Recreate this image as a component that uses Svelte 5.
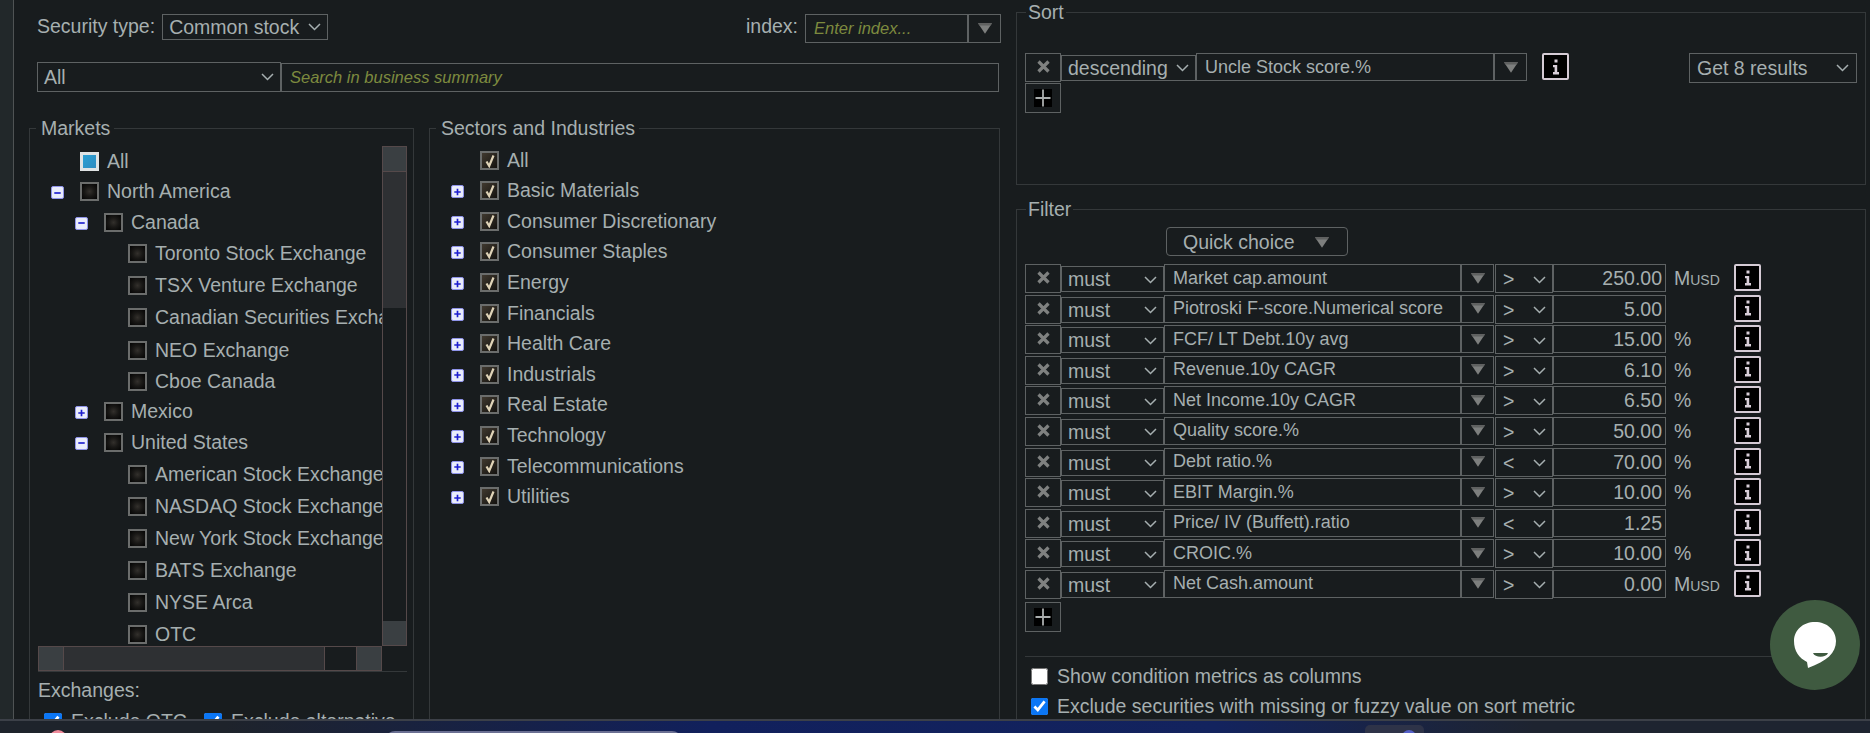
<script>
  const markets = [
    { label: 'All', depth: 0, state: 'partial', h: 30 },
    { label: 'North America', depth: 0, toggle: '-', h: 31 },
    { label: 'Canada', depth: 1, toggle: '-', h: 30 },
    { label: 'Toronto Stock Exchange', depth: 2, h: 32 },
    { label: 'TSX Venture Exchange', depth: 2, h: 32 },
    { label: 'Canadian Securities Exchange', depth: 2, h: 33 },
    { label: 'NEO Exchange', depth: 2, h: 32 },
    { label: 'Cboe Canada', depth: 2, h: 31 },
    { label: 'Mexico', depth: 1, toggle: '+', h: 29 },
    { label: 'United States', depth: 1, toggle: '-', h: 32 },
    { label: 'American Stock Exchange', depth: 2, h: 32 },
    { label: 'NASDAQ Stock Exchange', depth: 2, h: 32 },
    { label: 'New York Stock Exchange', depth: 2, h: 32 },
    { label: 'BATS Exchange', depth: 2, h: 32 },
    { label: 'NYSE Arca', depth: 2, h: 32 },
    { label: 'OTC', depth: 2, h: 32 }
  ];

  const sectors = [
    'Basic Materials', 'Consumer Discretionary', 'Consumer Staples', 'Energy', 'Financials',
    'Health Care', 'Industrials', 'Real Estate', 'Technology', 'Telecommunications', 'Utilities'
  ];

  const filters = [
    { metric: 'Market cap.amount', op: '>', value: '250.00', unit: 'M' },
    { metric: 'Piotroski F-score.Numerical score', op: '>', value: '5.00', unit: '' },
    { metric: 'FCF/ LT Debt.10y avg', op: '>', value: '15.00', unit: '%' },
    { metric: 'Revenue.10y CAGR', op: '>', value: '6.10', unit: '%' },
    { metric: 'Net Income.10y CAGR', op: '>', value: '6.50', unit: '%' },
    { metric: 'Quality score.%', op: '>', value: '50.00', unit: '%' },
    { metric: 'Debt ratio.%', op: '<', value: '70.00', unit: '%' },
    { metric: 'EBIT Margin.%', op: '>', value: '10.00', unit: '%' },
    { metric: 'Price/ IV (Buffett).ratio', op: '<', value: '1.25', unit: '' },
    { metric: 'CROIC.%', op: '>', value: '10.00', unit: '%' },
    { metric: 'Net Cash.amount', op: '>', value: '0.00', unit: 'M' }
  ];
</script>

{#snippet chevron()}
  <svg class="chev" viewBox="0 0 13 8" width="13" height="8"><path d="M1 1 L6.5 6.5 L12 1" fill="none" stroke="#a6afb0" stroke-width="1.5" /></svg>
{/snippet}

{#snippet tri()}
  <svg class="tri" viewBox="0 0 15 11" width="14" height="11"><path d="M0 0 H15 L7.5 11 Z" fill="#7d7f7e" /><path d="M0 0 H15 L13.4 2.4 H1.6 Z" fill="#5f6160" /></svg>
{/snippet}

{#snippet remove()}
  <span class="btn-x">
    <svg viewBox="0 0 13 13" width="13" height="13"><path d="M1.5 1.5 L11.5 11.5 M11.5 1.5 L1.5 11.5" stroke="#7f8180" stroke-width="3.2" /></svg>
  </span>
{/snippet}

{#snippet add()}
  <span class="btn-x add">
    <span class="plus-box">
      <svg viewBox="0 0 18 18" width="18" height="18"><path d="M9 0.5 V17.5 M1.5 9 H16.5" stroke="#a9adad" stroke-width="1.8" /></svg>
    </span>
  </span>
{/snippet}

{#snippet info()}
  <span class="info">
    <svg viewBox="0 0 8 16" width="8" height="16">
      <rect x="2.5" y="0.5" width="3" height="3" fill="#d9cfd9" />
      <path d="M1 6 H5.2 V13 H7 V15.5 H1 V13 H2.6 V8.2 H1 Z" fill="#d9cfd9" />
    </svg>
  </span>
{/snippet}

{#snippet toggle(sign)}
  <span class="toggle">
    <svg viewBox="0 0 12 12" width="12" height="12">
      <path d={sign === '+' ? 'M2.5 6 H9.5 M6 2.5 V9.5' : 'M2.5 6 H9.5'} stroke="#1c1ccf" stroke-width="1.8" />
    </svg>
  </span>
{/snippet}

{#snippet checked()}
  <span class="tick">
    <svg viewBox="0 0 12 14" width="12" height="14"><path d="M2.5 7.5 L5.2 12 L9.5 1.5" fill="none" stroke="#e0d4b8" stroke-width="2.2" /></svg>
  </span>
{/snippet}

<div class="page">
  <div class="rail"></div>

  <div class="screen">
    <div class="left">
      <div class="top-row">
        <span class="label">Security type:</span>
        <span class="select sec-type">Common stock {@render chevron()}</span>
        <span class="spacer"></span>
        <span class="label">index:</span>
        <span class="combo">
          <span class="placeholder">Enter index...</span>
          <span class="combo-btn">{@render tri()}</span>
        </span>
      </div>

      <div class="search-row">
        <span class="select all-select">All {@render chevron()}</span>
        <span class="search"><span class="placeholder">Search in business summary</span></span>
      </div>

      <div class="panels">
        <fieldset class="markets">
          <legend>Markets</legend>
          <div class="tree-box">
            <div class="tree">
              {#each markets as m}
                <div class="node" style="height: {m.h}px; padding-left: {m.depth * 24}px">
                  <span class="toggle-slot">{#if m.toggle}{@render toggle(m.toggle)}{/if}</span>
                  <span class="box" class:partial={m.state === 'partial'}></span>
                  <span class="node-label">{m.label}</span>
                </div>
              {/each}
            </div>
            <div class="vscroll">
              <span class="sb-end"></span>
              <span class="sb-thumb v"></span>
              <span class="sb-track"></span>
              <span class="sb-end"></span>
            </div>
            <div class="hscroll">
              <span class="sb-end"></span>
              <span class="sb-thumb h"></span>
              <span class="sb-track"></span>
              <span class="sb-end"></span>
            </div>
          </div>
          <div class="exchanges">
            <div class="label">Exchanges:</div>
            <div class="ex-row">
              <input type="checkbox" checked /> <span>Exclude OTC</span>
              <input class="second" type="checkbox" checked /> <span>Exclude alternative</span>
            </div>
          </div>
        </fieldset>

        <fieldset class="sectors">
          <legend>Sectors and Industries</legend>
          <div class="node sector first">
            <span class="toggle-slot"></span>
            <span class="box">{@render checked()}</span>
            <span class="node-label">All</span>
          </div>
          {#each sectors as s}
            <div class="node sector">
              <span class="toggle-slot">{@render toggle('+')}</span>
              <span class="box">{@render checked()}</span>
              <span class="node-label">{s}</span>
            </div>
          {/each}
        </fieldset>
      </div>
    </div>

    <div class="right">
      <fieldset class="sort">
        <legend>Sort</legend>
        <div class="sort-row">
          <div class="sort-main">
            <div class="row">
              {@render remove()}
              <span class="select order">descending {@render chevron()}</span>
              <span class="combo metric sort-metric">
                <span class="metric-text">Uncle Stock score.%</span>
                <span class="combo-btn">{@render tri()}</span>
              </span>
              <span class="info-gap">{@render info()}</span>
            </div>
            {@render add()}
          </div>
          <span class="select results">Get 8 results {@render chevron()}</span>
        </div>
      </fieldset>

      <fieldset class="filter">
        <legend>Filter</legend>
        <div class="quick-row">
          <span class="quick">Quick choice {@render tri()}</span>
        </div>
        {#each filters as f}
          <div class="row filter-row">
            {@render remove()}
            <span class="select must">must {@render chevron()}</span>
            <span class="combo metric">
              <span class="metric-text">{f.metric}</span>
              <span class="combo-btn">{@render tri()}</span>
            </span>
            <span class="select op">{f.op} {@render chevron()}</span>
            <span class="value">{f.value}</span>
            <span class="unit">{#if f.unit === 'M'}M<small>USD</small>{:else}{f.unit}{/if}</span>
            {@render info()}
          </div>
        {/each}
        {@render add()}
        <div class="options">
          <label><input type="checkbox" /> Show condition metrics as columns</label>
          <label><input type="checkbox" checked /> Exclude securities with missing or fuzzy value on sort metric</label>
        </div>
      </fieldset>
    </div>
  </div>

  <div class="chat">
    <svg viewBox="0 0 42 46" width="42" height="46">
      <path d="M21 0 C33 0 42 8 42 19 C42 31 33 39 14 46 L13 40 C5 36 0 29 0 19 C0 8 9 0 21 0 Z" fill="#fff" />
      <path d="M19 31 H34 C32 36 21 36 19 31 Z" fill="#3f5a40" />
    </svg>
  </div>

  <div class="taskbar">
    <span class="dot"></span>
    <span class="pill"></span>
    <span class="tab"><span class="tab-dot"></span></span>
  </div>
</div>

<style>
  :global(body) {
    margin: 0;
    background: #181c1e;
    overflow: hidden;
  }

  .page {
    position: relative;
    width: 1870px;
    height: 733px;
    overflow: hidden;
    font-family: 'Liberation Sans', Arial, sans-serif;
    font-size: 19.5px;
    color: #a6afb0;
  }

  .rail {
    position: absolute;
    left: 0;
    top: 0;
    bottom: 0;
    width: 13px;
    background: #22282a;
    border-right: 1px solid #4f5354;
  }

  .screen {
    display: flex;
    height: 719px;
    overflow: hidden;
    padding-left: 14px;
    box-sizing: border-box;
  }

  .left {
    width: 1002px;
    flex: none;
    padding-left: 15px;
    box-sizing: border-box;
  }

  .top-row {
    display: flex;
    align-items: flex-start;
    height: 29px;
    margin-top: 14px;
    padding-left: 8px;
    padding-right: 15px;
  }

  .spacer {
    flex: 1;
  }

  .label {
    white-space: nowrap;
    line-height: 24px;
  }

  .select {
    display: inline-flex;
    align-items: center;
    justify-content: space-between;
    box-sizing: border-box;
    border: 1px solid #5e6263;
    padding: 0 6px;
    white-space: nowrap;
    background: #181c1e;
  }

  .sec-type {
    width: 166px;
    height: 26px;
    margin-left: 7px;
  }

  .combo {
    display: inline-flex;
    box-sizing: border-box;
    border: 1px solid #5e6263;
    align-items: stretch;
    background: #181c1e;
  }

  .top-row .combo {
    width: 196px;
    height: 29px;
    margin-left: 7px;
  }

  .placeholder {
    flex: 1;
    align-self: center;
    padding-left: 8px;
    font-style: italic;
    font-size: 16.5px;
    color: #7d8a3e;
  }

  .combo-btn {
    flex: none;
    width: 33px;
    display: flex;
    align-items: center;
    justify-content: center;
    border-left: 2px solid #5e6263;
    box-sizing: border-box;
  }

  .search-row {
    display: flex;
    margin-top: 19px;
    margin-left: 8px;
    height: 30px;
  }

  .all-select {
    width: 244px;
    height: 30px;
  }

  .search {
    display: flex;
    align-items: center;
    width: 718px;
    height: 29px;
    margin-top: 1px;
    box-sizing: border-box;
    border: 1px solid #5e6263;
  }

  .panels {
    display: flex;
    gap: 15px;
    margin-top: 25px;
    height: 620px;
  }

  fieldset {
    margin: 0;
    padding: 0;
    box-sizing: border-box;
    border: 1px solid #34383a;
    min-width: 0;
  }

  legend {
    margin-left: 6px;
    padding: 0 4px 0 5px;
    font-size: 19.5px;
    line-height: 23px;
    color: #a6afb0;
  }

  .markets {
    width: 385px;
    padding: 6px 0 0 8px;
  }

  .markets legend {
    margin-left: -2px;
  }

  .sectors {
    width: 571px;
    padding-top: 6px;
    padding-left: 0;
  }

  .tree-box {
    display: grid;
    grid-template-columns: 344px 25px;
    grid-template-rows: 500px 25px;
    height: 525px;
  }

  .tree {
    overflow: hidden;
    white-space: nowrap;
    width: 344px;
  }

  .node {
    display: flex;
    align-items: center;
    box-sizing: border-box;
    white-space: nowrap;
  }

  .sector {
    height: 30.6px;
    padding-left: 1px;
  }

  .sector.first {
    height: 29.5px;
  }

  .toggle-slot {
    width: 29px;
    margin-left: 13px;
    flex: none;
    display: flex;
    align-items: center;
    padding-top: 2px;
  }

  .sector .toggle-slot {
    margin-left: 20px;
  }

  .toggle {
    display: flex;
    align-items: center;
    justify-content: center;
    box-sizing: border-box;
    width: 13px;
    height: 13px;
    background: #e9ecfb;
    border: 1px solid #8f93ea;
    border-radius: 2px;
  }

  .box {
    flex: none;
    display: flex;
    align-items: center;
    justify-content: center;
    box-sizing: border-box;
    width: 19px;
    height: 19px;
    border: 2px solid #6b6d6c;
    background: radial-gradient(circle, #33302c 0%, #191816 45%, #030303 100%);
  }

  .sector .box {
    background: linear-gradient(135deg, #40392f, #14120f);
  }

  .box.partial {
    background: linear-gradient(135deg, #2aa0d4, #2f8cc0);
    border: 3px solid #dfe3e4;
  }

  .tick {
    display: flex;
  }

  .node-label {
    margin-left: 8px;
  }

  .vscroll {
    grid-column: 2;
    grid-row: 1;
    display: flex;
    flex-direction: column;
    width: 25px;
    box-sizing: border-box;
    border: 1px solid #55494a;
  }

  .hscroll {
    grid-column: 1;
    grid-row: 2;
    display: flex;
    width: 344px;
    box-sizing: border-box;
    border: 1px solid #55494a;
  }

  .sb-end {
    flex: none;
    width: 23px;
    height: 24px;
    background: #3a3f42;
  }

  .hscroll .sb-end {
    width: 24px;
    height: 23px;
  }

  .sb-thumb {
    background: #2e3033;
    border: 0 solid #55494a;
    box-sizing: border-box;
  }

  .sb-thumb.v {
    height: 137px;
    border-top-width: 1px;
  }

  .sb-thumb.h {
    width: 262px;
    height: 23px;
    border-left-width: 1px;
    border-right-width: 1px;
  }

  .sb-track {
    flex: 1;
    background: #181c1e;
  }

  .hscroll .sb-track {
    border-right: 1px solid #55494a;
  }

  .exchanges {
    border-top: 1px solid #34383a;
    padding-top: 6px;
    width: 369px;
  }

  .ex-row {
    display: flex;
    align-items: center;
    margin-top: 8px;
    padding-left: 6px;
  }

  .ex-row input {
    margin: 0 9px 0 0;
    width: 18px;
    height: 18px;
    accent-color: #0b76f5;
  }

  .ex-row .second {
    margin-left: 17px;
  }

  .right {
    flex: 1;
    min-width: 0;
    padding-right: 4px;
    box-sizing: border-box;
  }

  .sort {
    height: 184px;
    margin-top: 1px;
    padding: 0 8px;
  }

  .sort legend, .filter legend {
    margin-left: 1px;
    padding: 0 2px;
  }

  .sort-row {
    display: flex;
    justify-content: space-between;
    margin-top: 29px;
  }

  .sort-main {
    display: flex;
    flex-direction: column;
  }

  .row {
    display: flex;
    align-items: flex-start;
  }

  .btn-x {
    flex: none;
    display: flex;
    align-items: center;
    justify-content: center;
    box-sizing: border-box;
    width: 36px;
    height: 29px;
    border: 1px solid #5e6263;
    padding-bottom: 2px;
    background: #181c1e;
  }

  .add {
    height: 30px;
    margin-top: 1px;
    padding-bottom: 0;
  }

  .plus-box {
    display: flex;
    background: #000;
  }

  .order {
    width: 135px;
    height: 26px;
    margin-top: 2px;
  }

  .metric {
    height: 28px;
    flex: none;
    width: 330px;
    font-size: 18px;
  }

  .sort-metric {
    width: 331px;
  }

  .metric-text {
    flex: 1;
    align-self: center;
    padding-left: 8px;
    white-space: nowrap;
  }

  .info-gap {
    margin-left: 15px;
  }

  .info {
    flex: none;
    display: flex;
    align-items: center;
    justify-content: center;
    box-sizing: border-box;
    width: 27px;
    height: 27px;
    background: #000;
    border: 2px solid #d5cbd5;
    border-radius: 2px;
  }

  .results {
    width: 168px;
    height: 30px;
    padding: 0 7px;
  }

  .filter {
    margin-top: 13px;
    height: 560px;
    padding: 0 8px;
    position: relative;
  }

  .quick-row {
    height: 43px;
    padding-left: 141px;
    padding-top: 6px;
    box-sizing: border-box;
  }

  .quick {
    display: inline-flex;
    align-items: center;
    gap: 20px;
    box-sizing: border-box;
    width: 182px;
    height: 29px;
    padding-left: 16px;
    padding-top: 1px;
    border: 1px solid #5e6263;
    border-radius: 4px;
  }

  .filter-row {
    height: 30.6px;
  }

  .must {
    width: 103px;
    height: 26px;
    margin-top: 2px;
    padding-top: 1px;
  }

  .op {
    width: 58px;
    height: 29px;
    margin-left: 1px;
    padding: 2px 6px 0 7px;
  }

  .value {
    width: 113px;
    height: 28px;
    box-sizing: border-box;
    border: 1px solid #5e6263;
    text-align: right;
    padding-right: 3px;
    line-height: 27px;
  }

  .unit {
    width: 68px;
    padding-left: 8px;
    box-sizing: border-box;
    line-height: 29px;
  }

  .unit small {
    font-size: 14px;
  }

  .options {
    margin-top: 24px;
    border-top: 1px solid #34383a;
    padding-top: 9px;
    display: flex;
    flex-direction: column;
    gap: 9px;
  }

  .options label {
    display: flex;
    align-items: center;
    height: 21px;
    gap: 9px;
    padding-left: 6px;
  }

  .options input {
    margin: 0;
    width: 17px;
    height: 17px;
    accent-color: #0b76f5;
  }

  .chat {
    position: absolute;
    left: 1770px;
    top: 600px;
    width: 90px;
    height: 90px;
    border-radius: 50%;
    background: #3f5a40;
    display: flex;
    align-items: center;
    justify-content: center;
  }

  .taskbar {
    position: absolute;
    left: 0;
    right: 0;
    top: 719px;
    height: 14px;
    border-top: 2px solid #3c4048;
    box-sizing: border-box;
    background: linear-gradient(90deg, #1e232b 0%, #1e232b 12%, #11205c 38%, #13235e 65%, #1e2430 82%, #1e2430 100%);
    overflow: hidden;
  }

  .dot {
    position: absolute;
    left: 49px;
    top: 9px;
    width: 18px;
    height: 18px;
    border-radius: 50%;
    background: #f08a9a;
  }

  .pill {
    position: absolute;
    left: 385px;
    top: 10px;
    width: 297px;
    height: 20px;
    border-radius: 10px 10px 0 0;
    background: #6a6f92;
  }

  .tab {
    position: absolute;
    left: 1365px;
    top: 4px;
    width: 59px;
    height: 30px;
    border-radius: 5px;
    background: #2e3348;
  }

  .tab-dot {
    position: absolute;
    left: 37px;
    top: 5px;
    width: 14px;
    height: 14px;
    border-radius: 50%;
    background: #5560c8;
  }
</style>
